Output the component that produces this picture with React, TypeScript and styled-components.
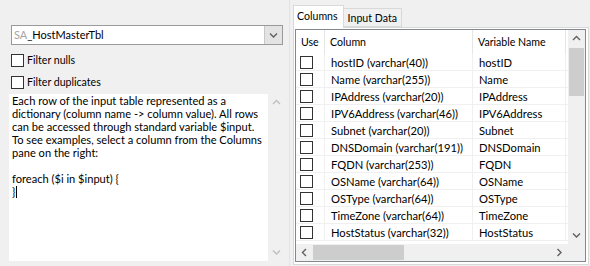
import React from "react";
import styled, { createGlobalStyle } from "styled-components";

const GlobalStyle = createGlobalStyle`
  html, body { margin: 0; padding: 0; }
  body {
    background: #f0f0f0;
    font-family: Lato, "Noto Sans", "Liberation Sans", sans-serif;
    font-size: 11px;
    color: #000;
  }
`;

// ============== LAYOUT ==============

const Window = styled.div`
  width: 590px;
  height: 266px;
  display: flex;
  overflow: hidden;
  background: #f0f0f0;
`;

const LeftPane = styled.div`
  width: 290px;
  box-sizing: border-box;
  padding: 25px 0 0 9px;
  display: flex;
  flex-direction: column;
  border-right: 1px solid #e3e3e3;
`;

const RightPane = styled.div`
  flex: 1;
  min-width: 0;
  box-sizing: border-box;
  height: 266px;
  padding: 5px 1px 1px 3px;
  display: flex;
  flex-direction: column;
`;

// ============== LEFT SIDE ==============

const Combo = styled.div`
  margin-left: 2px;
  width: 272px;
  height: 20px;
  box-sizing: border-box;
  border: 1px solid #9a9a9a;
  background: #fff;
  display: flex;
`;

const ComboText = styled.div`
  flex: 1;
  padding-left: 2px;
  line-height: 18px;
  font-size: 11px;
  white-space: nowrap;
`;

const Prefix = styled.span`
  color: #a6a6a6;
`;

const ComboButton = styled.div`
  width: 17px;
  background: #e3e3e3;
  border-left: 1px solid #c8c8c8;
  display: flex;
  align-items: center;
  justify-content: center;
`;

const CheckRow = styled.label<{ $top: number }>`
  display: flex;
  align-items: center;
  gap: 3px;
  margin-left: 2px;
  height: 13px;
  margin-top: ${(p) => p.$top}px;
`;

const Box = styled.span`
  display: inline-block;
  width: 13px;
  height: 13px;
  box-sizing: border-box;
  border: 1px solid #333;
  background: #fff;
  flex: none;
`;

const Label = styled.span`
  font-size: 10.6px;
  line-height: 13px;
`;

const Editor = styled.div`
  margin-top: 5px;
  width: 276px;
  height: 167px;
  display: flex;
  background: #fff;
`;

const EditorText = styled.div`
  flex: 1;
  padding: 0 1px 0 3px;
  white-space: pre-wrap;
  line-height: 13px;
  font-size: 11.1px;
  overflow: hidden;
`;

const Caret = styled.span`
  display: inline-block;
  width: 1px;
  height: 12px;
  background: #000;
  vertical-align: -2px;
  margin-left: 1px;
`;

// ============== SCROLLBARS ==============

const VScroll = styled.div`
  width: 17px;
  background: #f0f0f0;
  display: flex;
  flex-direction: column;
  flex: none;
`;

const HScroll = styled.div`
  height: 17px;
  background: #f0f0f0;
  display: flex;
  flex: 1;
`;

const Arrow = styled.div`
  width: 17px;
  height: 17px;
  display: flex;
  align-items: center;
  justify-content: center;
  flex: none;
`;

const Track = styled.div`
  flex: 1;
  min-height: 0;
`;

const VThumb = styled.div`
  margin: 1px 1px 0 1px;
  height: 48px;
  background: #cdcdcd;
`;

const HThumb = styled.div`
  margin: 1px 0 1px 0;
  width: 91px;
  height: 15px;
  background: #cdcdcd;
`;

const Chevron: React.FC<{ dir: "up" | "down" | "left" | "right"; color?: string }> = ({
  dir,
  color = "#606060",
}) => {
  const pts = {
    up: "1,5 4.5,1.5 8,5",
    down: "1,1.5 4.5,5 8,1.5",
    left: "5,1 1.5,4.5 5,8",
    right: "1.5,1 5,4.5 1.5,8",
  }[dir];
  const vertical = dir === "up" || dir === "down";
  return (
    <svg width={vertical ? 9 : 7} height={vertical ? 7 : 9} viewBox={vertical ? "0 0 9 7" : "0 0 7 9"}>
      <polyline points={pts} fill="none" stroke={color} strokeWidth="1.4" />
    </svg>
  );
};

// ============== TABS ==============

const TabStrip = styled.div`
  display: flex;
  align-items: flex-end;
  height: 22px;
  flex: none;
  position: relative;
  z-index: 1;
`;

const Tab = styled.div<{ $active?: boolean }>`
  box-sizing: border-box;
  padding: 0 ${(p) => (p.$active ? "5px" : "4px")} 0 ${(p) => (p.$active ? "3px" : "4px")};
  height: ${(p) => (p.$active ? "23px" : "19px")};
  line-height: ${(p) => (p.$active ? "21px" : "18px")};
  margin-bottom: ${(p) => (p.$active ? "-1px" : "0")};
  border: 1px solid #d9d9d9;
  border-bottom: ${(p) => (p.$active ? "none" : "1px solid #d9d9d9")};
  border-left: ${(p) => (p.$active ? "1px solid #d9d9d9" : "none")};
  background: ${(p) => (p.$active ? "#fff" : "#f0f0f0")};
  font-size: 10.6px;
`;

const TabPage = styled.div`
  flex: 1;
  min-height: 0;
  border: 1px solid #d9d9d9;
  background: #fff;
  padding: 1px 2px 2px 1px;
  display: flex;
`;

// ============== LIST VIEW ==============

const ListView = styled.div`
  flex: 1;
  min-width: 0;
  border: 1px solid #828790;
  background: #fff;
  display: flex;
  flex-direction: column;
  overflow: hidden;
`;

const ListBody = styled.div`
  flex: 1;
  min-height: 0;
  display: flex;
  overflow: hidden;
`;

const Grid = styled.div`
  flex: 1;
  overflow: hidden;
`;

const cols = "29px 148px 93px";

const HeaderRow = styled.div`
  display: grid;
  grid-template-columns: ${cols};
  height: 24px;
`;

const HeaderCell = styled.div`
  padding-left: 5px;
  line-height: 25px;
  border-right: 1px solid #e5e5e5;
  font-size: 10.6px;
  white-space: nowrap;
`;

const Row = styled.div`
  display: grid;
  grid-template-columns: ${cols};
  height: 17px;
  box-sizing: border-box;
  border-bottom: 1px solid #f0f0f0;
`;

const Cell = styled.div`
  padding-left: 6px;
  line-height: 17px;
  border-right: 1px solid #f0f0f0;
  white-space: nowrap;
  overflow: hidden;
  font-size: 11.2px;
`;

const CheckCell = styled.div`
  padding-left: 4px;
  display: flex;
  align-items: center;
  border-right: 1px solid #f0f0f0;
`;

const Footer = styled.div`
  display: flex;
  height: 17px;
  flex: none;
`;

const Corner = styled.div`
  width: 17px;
  background: #f0f0f0;
`;

const columns: [string, string][] = [
  ["hostID (varchar(40))", "hostID"],
  ["Name (varchar(255))", "Name"],
  ["IPAddress (varchar(20))", "IPAddress"],
  ["IPV6Address (varchar(46))", "IPV6Address"],
  ["Subnet (varchar(20))", "Subnet"],
  ["DNSDomain (varchar(191))", "DNSDomain"],
  ["FQDN (varchar(253))", "FQDN"],
  ["OSName (varchar(64))", "OSName"],
  ["OSType (varchar(64))", "OSType"],
  ["TimeZone (varchar(64))", "TimeZone"],
  ["HostStatus (varchar(32))", "HostStatus"],
];

const help =
  "Each row of the input table represented as a dictionary (column name -> column value). All rows can be accessed through standard variable $input. To see examples, select a column from the Columns pane on the right:\n\nforeach ($i in $input) {\n}";

export default function App() {
  return (
    <>
      <GlobalStyle />
      <Window>
        <LeftPane>
          <Combo>
            <ComboText>
              <Prefix>SA</Prefix>_HostMasterTbl
            </ComboText>
            <ComboButton>
              <Chevron dir="down" />
            </ComboButton>
          </Combo>
          <CheckRow $top={9}>
            <Box />
            <Label>Filter nulls</Label>
          </CheckRow>
          <CheckRow $top={9}>
            <Box />
            <Label>Filter duplicates</Label>
          </CheckRow>
          <Editor>
            <EditorText>
              {help}
              <Caret />
            </EditorText>
            <VScroll>
              <Arrow>
                <Chevron dir="up" color="#bfbfbf" />
              </Arrow>
              <Track />
              <Arrow>
                <Chevron dir="down" color="#bfbfbf" />
              </Arrow>
            </VScroll>
          </Editor>
        </LeftPane>

        <RightPane>
          <TabStrip>
            <Tab $active>Columns</Tab>
            <Tab>Input Data</Tab>
          </TabStrip>
          <TabPage>
            <ListView>
              <ListBody>
                <Grid>
                  <HeaderRow>
                    <HeaderCell>Use</HeaderCell>
                    <HeaderCell>Column</HeaderCell>
                    <HeaderCell>Variable Name</HeaderCell>
                  </HeaderRow>
                  {columns.map(([col, name]) => (
                    <Row key={name}>
                      <CheckCell>
                        <Box />
                      </CheckCell>
                      <Cell>{col}</Cell>
                      <Cell>{name}</Cell>
                    </Row>
                  ))}
                </Grid>
                <VScroll>
                  <Arrow>
                    <Chevron dir="up" />
                  </Arrow>
                  <Track>
                    <VThumb />
                  </Track>
                  <Arrow>
                    <Chevron dir="down" />
                  </Arrow>
                </VScroll>
              </ListBody>
              <Footer>
                <HScroll>
                  <Arrow>
                    <Chevron dir="left" />
                  </Arrow>
                  <Track>
                    <HThumb />
                  </Track>
                  <Arrow>
                    <Chevron dir="right" />
                  </Arrow>
                </HScroll>
                <Corner />
              </Footer>
            </ListView>
          </TabPage>
        </RightPane>
      </Window>
    </>
  );
}
